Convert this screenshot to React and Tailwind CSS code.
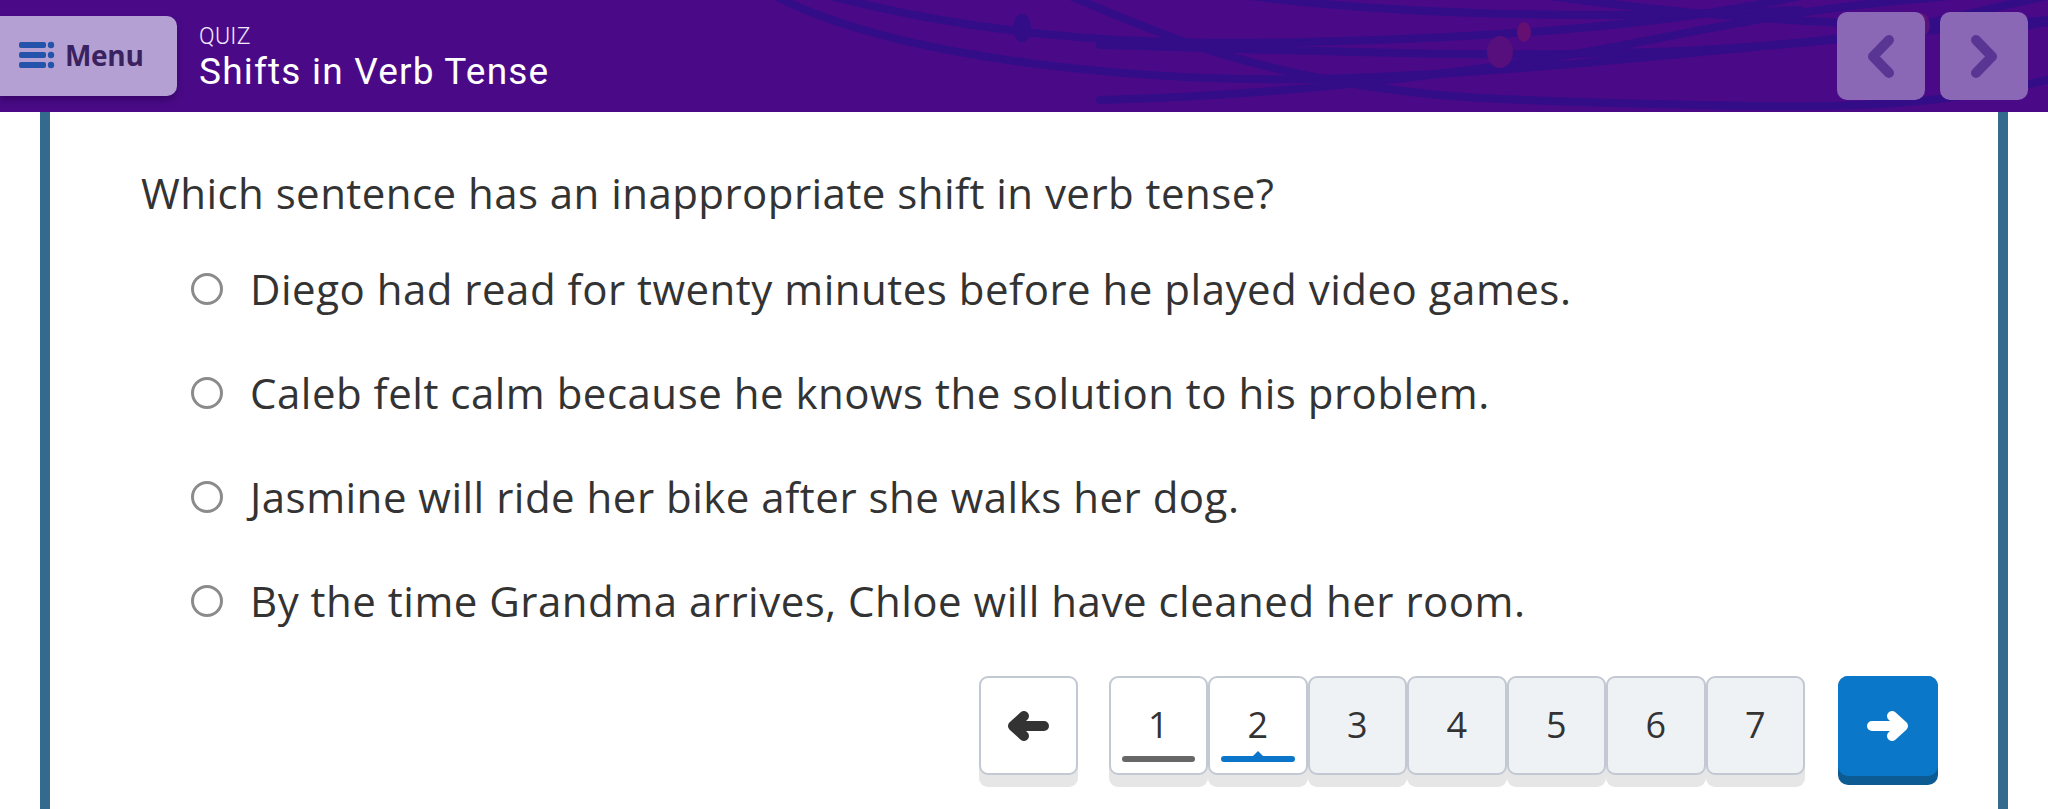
import React from "react";

const FONT = { fontFamily: '"Open Sans", "Noto Sans", sans-serif' };
const HFONT = { fontFamily: 'Roboto, "Open Sans", sans-serif' };

function MenuIcon() {
  return (
    <svg width="36" height="28" viewBox="0 0 36 28">
      <rect x="0" y="1" width="27" height="6" rx="2" fill="#2453ab" />
      <rect x="0" y="11" width="27" height="6" rx="2" fill="#2453ab" />
      <rect x="0" y="21" width="27" height="6" rx="2" fill="#2453ab" />
      <circle cx="32" cy="4" r="3.2" fill="#2453ab" />
      <circle cx="32" cy="14" r="3.2" fill="#2453ab" />
      <circle cx="32" cy="24" r="3.2" fill="#2453ab" />
    </svg>
  );
}

function Chevron({ dir }) {
  const d = dir === "left" ? "M24 6 L8 22.5 L24 39" : "M8 6 L24 22.5 L8 39";
  return (
    <svg width="32" height="45" viewBox="0 0 32 45">
      <path d={d} stroke="#5a3694" strokeWidth="10" strokeLinecap="round" strokeLinejoin="round" fill="none" />
    </svg>
  );
}

function Arrow({ dir, color }) {
  const d =
    dir === "left"
      ? "M37 16 L7 16 M17 6 L6 16 L17 26"
      : "M5 16 L35 16 M25 6 L36 16 L25 26";
  return (
    <svg width="42" height="32" viewBox="0 0 42 32">
      <path d={d} stroke={color} strokeWidth="10" strokeLinecap="round" strokeLinejoin="round" fill="none" />
    </svg>
  );
}

function HeaderCurves() {
  return (
    <svg
      className="absolute inset-0 pointer-events-none"
      width="2048"
      height="112"
      viewBox="0 0 2048 112"
      fill="none"
    >
      <g stroke="#330d88" strokeWidth="8" strokeLinecap="round">
        <path d="M775 -4 C 900 60, 1150 85, 1350 78 S 1700 50, 2048 20" />
        <path d="M830 -4 C 1000 40, 1150 45, 1300 42 S 1650 30, 1800 -4" />
        <path d="M1070 -4 C 1150 30, 1220 60, 1330 80 S 1500 100, 1700 105 S 1950 100, 2048 80" />
        <path d="M1100 45 C 1300 50, 1500 60, 1700 50 S 1950 15, 2048 -4" />
        <path d="M1100 100 C 1300 95, 1500 70, 1650 40 S 1850 5, 1950 -4" />
        <path d="M1250 -4 C 1400 15, 1600 20, 1800 10" />
        <path d="M1550 -4 C 1650 10, 1750 20, 1900 25 S 2000 28, 2048 22" />
      </g>
      <ellipse cx="1022" cy="28" rx="9" ry="14" fill="#330d88" />
      <ellipse cx="1500" cy="52" rx="13" ry="16" fill="#560f7c" />
      <ellipse cx="1524" cy="32" rx="7" ry="10" fill="#650f72" />
      <ellipse cx="1920" cy="25" rx="10" ry="12" fill="#7a1a70" opacity="0.5" />
    </svg>
  );
}

const options = [
  "Diego had read for twenty minutes before he played video games.",
  "Caleb felt calm because he knows the solution to his problem.",
  "Jasmine will ride her bike after she walks her dog.",
  "By the time Grandma arrives, Chloe will have cleaned her room.",
];

function PageButton({ n, state }) {
  const bg = state === "none" ? "bg-[#eff2f5]" : "bg-white";
  return (
    <div
      className={`relative w-[99.5px] h-[99px] rounded-[9px] border-2 border-[#c3c9d2] ${bg} shadow-[0_12px_0_#e6e6e6] flex items-start justify-center`}
    >
      <span className="mt-[29px] text-[36px] leading-[36px] text-[#333]">{n}</span>
      {state === "done" && (
        <div className="absolute left-[11px] right-[11px] bottom-[11px] h-[6px] rounded-full bg-[#676767]" />
      )}
      {state === "current" && (
        <>
          <div className="absolute left-[11px] right-[11px] bottom-[11px] h-[6px] rounded-full bg-[#0b76c9]" />
          <div className="absolute left-1/2 -translate-x-1/2 bottom-[15px] w-0 h-0 border-l-[7px] border-r-[7px] border-b-[7px] border-l-transparent border-r-transparent border-b-[#0b76c9]" />
        </>
      )}
    </div>
  );
}

export default function App() {
  return (
    <div className="min-h-[809px] bg-white" style={FONT}>
      <header className="relative h-[112px] bg-[#4a0a87] overflow-hidden flex items-start">
        <HeaderCurves />
        <button className="relative mt-[16px] w-[177px] h-[80px] rounded-r-[10px] bg-[#b4a0d3] shadow-[0_5px_6px_rgba(40,0,80,0.45)] flex items-center pl-[19px] gap-[10px] pb-[3px]">
          <MenuIcon />
          <span className="text-[28px] font-bold text-[#3a2160] tracking-[-0.3px]">Menu</span>
        </button>
        <div className="relative ml-[22px] mt-[22px] flex flex-col text-white" style={HFONT}>
          <span className="text-[23px] leading-[29px] font-light text-[#f1eaff] tracking-[0.3px]">QUIZ</span>
          <span className="text-[37px] leading-[42px] font-normal tracking-[1.2px]">Shifts in Verb Tense</span>
        </div>
        <div className="relative ml-auto mt-[12px] mr-[20px] flex gap-[15px]">
          <div className="w-[88px] h-[88px] rounded-[10px] bg-[#8b68b6] flex items-center justify-center">
            <Chevron dir="left" />
          </div>
          <div className="w-[88px] h-[88px] rounded-[10px] bg-[#8b68b6] flex items-center justify-center">
            <Chevron dir="right" />
          </div>
        </div>
      </header>

      <main className="mx-[40px] border-x-[10px] border-[#336a8d] min-h-[697px] bg-white text-[#333]">
        <div className="pl-[91px] pt-[56px]">
          <p className="text-[42px] leading-[50px] tracking-[0.45px]">
            Which sentence has an inappropriate shift in verb tense?
          </p>
          <div className="mt-[46px] ml-[50px] flex flex-col gap-[54px]">
            {options.map((o) => (
              <label key={o} className="flex items-center gap-[27px]">
                <span className="w-[32px] h-[32px] rounded-full border-[3px] border-[#8b8b8b] shrink-0" />
                <span className="text-[42px] leading-[50px] tracking-[0.5px]">{o}</span>
              </label>
            ))}
          </div>
        </div>
        <div className="mt-[50px] flex items-start justify-end pr-[60px]">
          <div className="w-[99px] h-[99px] rounded-[9px] border-2 border-[#c3c9d2] bg-white shadow-[0_12px_0_#e6e6e6] flex items-center justify-center">
            <Arrow dir="left" color="#333" />
          </div>
          <div className="ml-[31px] flex">
            <PageButton n="1" state="done" />
            <PageButton n="2" state="current" />
            <PageButton n="3" state="none" />
            <PageButton n="4" state="none" />
            <PageButton n="5" state="none" />
            <PageButton n="6" state="none" />
            <PageButton n="7" state="none" />
          </div>
          <div className="ml-[33px] w-[100px] h-[109px] rounded-[10px] bg-[#0d5b93] flex items-start">
            <div className="w-full h-[100px] rounded-[10px] bg-[#0b77c9] flex items-center justify-center">
              <Arrow dir="right" color="#fff" />
            </div>
          </div>
        </div>
      </main>
    </div>
  );
}
